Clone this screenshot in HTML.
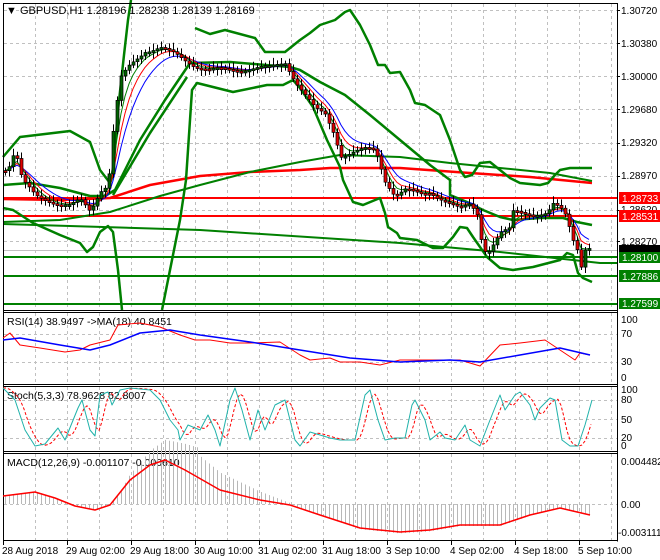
<!DOCTYPE html>
<html><head><meta charset="utf-8"><style>
html,body{margin:0;padding:0;background:#fff;width:660px;height:560px;overflow:hidden}
svg{display:block;font-family:"Liberation Sans",sans-serif;font-size:10.5px}
</style></head><body>
<svg id="s" width="660" height="560" viewBox="0 0 660 560" xmlns="http://www.w3.org/2000/svg">
<rect width="660" height="560" fill="#fff"/>
<g id="grid" stroke="#c0c0c0" stroke-dasharray="3,3" stroke-width="1"></g>
<g id="main"></g>
<path id="wick" d="" stroke="#000" stroke-width="1" fill="none"/>
<path id="bull" d="" stroke="#000" stroke-width="0.7" fill="#006400"/>
<path id="bear" d="" stroke="#000" stroke-width="0.7" fill="#e00000"/>
<g fill="none" stroke="#000" stroke-width="1">
<path d="M3.5 3.5V541.5"/>
<path d="M617.5 3.5V541.5"/>
<path d="M3 3.5H618"/>
<path d="M3 310.5H618M3 312.5H618"/>
<path d="M3 384.5H618M3 386.5H618"/>
<path d="M3 451.5H618M3 453.5H618"/>
<path d="M3 540.5H618"/>
</g>
<g id="ticks" stroke="#000"></g>
<g fill="#000">
<text x="6" y="14" font-size="11">▼ GBPUSD,H1  1.28196 1.28238 1.28139 1.28169</text>
<text x="7" y="325">RSI(14) 38.9497  -&gt;MA(18) 40.8451</text>
<text x="7" y="399">Stoch(5,3,3) 78.9628 52.8007</text>
<text x="7" y="466">MACD(12,26,9) -0.001107 -0.000610</text>
</g>
<g fill="#000" font-size="10">
<text x="621" y="14">1.30720</text>
<text x="621" y="47">1.30380</text>
<text x="621" y="80">1.30000</text>
<text x="621" y="113">1.29680</text>
<text x="621" y="146">1.29320</text>
<text x="621" y="179">1.28970</text>
<text x="621" y="213">1.28620</text>
<text x="621" y="245">1.28270</text>
<text x="621" y="323">100</text><text x="621" y="337">70</text><text x="621" y="365">30</text><text x="621" y="381">0</text>
<text x="621" y="393">100</text><text x="621" y="403">80</text><text x="621" y="423">50</text><text x="621" y="441">20</text><text x="621" y="449">0</text>
<text x="621" y="465">0.004482</text><text x="621" y="508">0.00</text><text x="618" y="536">-0.003111</text>
</g>
<g font-size="10" fill="#fff">
<rect x="619" y="192" width="41" height="12" fill="#f00"/><text x="622" y="202">1.28733</text>
<rect x="619" y="210" width="41" height="12" fill="#f00"/><text x="622" y="220">1.28531</text>
<rect x="619" y="245" width="41" height="7" fill="#000"/>
<rect x="619" y="252" width="41" height="11" fill="#008000"/><text x="622" y="261">1.28100</text>
<rect x="619" y="270" width="41" height="12" fill="#008000"/><text x="622" y="280">1.27886</text>
<rect x="619" y="298" width="41" height="11" fill="#008000"/><text x="622" y="307">1.27599</text>
</g>
<g fill="#000" font-size="10">
<text x="2" y="554">28 Aug 2018</text>
<text x="66" y="554">29 Aug 02:00</text>
<text x="130" y="554">29 Aug 18:00</text>
<text x="194" y="554">30 Aug 10:00</text>
<text x="258" y="554">31 Aug 02:00</text>
<text x="322" y="554">31 Aug 18:00</text>
<text x="386" y="554">3 Sep 10:00</text>
<text x="450" y="554">4 Sep 02:00</text>
<text x="514" y="554">4 Sep 18:00</text>
<text x="578" y="554">5 Sep 10:00</text>
</g>
</svg>
<script>
(function(){
var NS="http://www.w3.org/2000/svg",s=document.getElementById('s'),M=document.getElementById('main'),G=document.getElementById('grid'),T=document.getElementById('ticks');
function el(p,t,a){var e=document.createElementNS(NS,t);for(var k in a)e.setAttribute(k,a[k]);p.appendChild(e);return e}
function pl(p,pts,c,w,extra){var d=pts.map(function(q){return q[0]+','+q[1]}).join(' ');var a={points:d,fill:'none',stroke:c,'stroke-width':w,'stroke-linejoin':'round'};for(var k in extra)a[k]=extra[k];return el(p,'polyline',a)}
function interp(P,xx){for(var j=0;j<P.length-1;j++){if(xx>=P[j][0]&&xx<=P[j+1][0]){var t=(xx-P[j][0])/(P[j+1][0]-P[j][0]||1);return P[j][1]+t*(P[j+1][1]-P[j][1])}}return xx<P[0][0]?P[0][1]:P[P.length-1][1]}
for(var gx=35;gx<617;gx+=32){el(G,'line',{x1:gx+.5,y1:4,x2:gx+.5,y2:310});el(G,'line',{x1:gx+.5,y1:313,x2:gx+.5,y2:384});el(G,'line',{x1:gx+.5,y1:387,x2:gx+.5,y2:451});el(G,'line',{x1:gx+.5,y1:454,x2:gx+.5,y2:540})}
[10,43,76,109,143,176,210,241,275].forEach(function(y){el(G,'line',{x1:4,y1:y+.5,x2:617,y2:y+.5})});
[334,362,400,419,438,504].forEach(function(y){el(G,'line',{x1:4,y1:y+.5,x2:617,y2:y+.5})});
for(var tx=3;tx<617;tx+=64)el(T,'line',{x1:tx+.5,y1:541,x2:tx+.5,y2:545});
[10,43,76,109,143,176,210,241].forEach(function(y){el(T,'line',{x1:617,y1:y+.5,x2:620,y2:y+.5})});
el(M,'line',{x1:4,y1:250.5,x2:617,y2:250.5,stroke:'#c0c0c0','stroke-width':1});
[198,216].forEach(function(y){el(M,'line',{x1:4,y1:y,x2:617,y2:y,stroke:'#f00','stroke-width':2})});
[257,276,304].forEach(function(y){el(M,'line',{x1:4,y1:y,x2:617,y2:y,stroke:'#008000','stroke-width':2})});
pl(M,[[3,224],[200,230],[400,243],[500,252],[600,263],[617,263]],'#008000',2);
pl(M,[[3,199],[60,200],[110,198],[150,185],[200,176],[250,172],[300,170],[330,168],[400,168],[470,173],[530,177],[592,183]],'#f00',2.5);
pl(M,[[3,222],[60,220],[110,212],[160,196],[200,185],[250,172],[300,162],[340,155],[400,157],[450,163],[500,168],[550,173],[592,181]],'#008000',2);
pl(M,[[3,157],[20,137],[70,131],[90,142],[100,170],[110,183],[113,175],[118,110],[124,55],[128,20],[131,0]],'#008000',2.5);
pl(M,[[195,28],[210,34],[225,30],[255,38],[265,52],[285,52],[300,40],[310,33],[320,25],[335,20],[345,12],[350,10],[360,25],[370,45],[378,65],[385,65],[390,73],[400,72],[410,90],[415,103],[425,105],[440,115],[450,140],[460,170],[465,177],[472,175],[480,163],[490,162],[500,170],[510,178],[520,183],[540,185],[548,183],[555,175],[560,170],[570,168],[592,168]],'#008000',2.5);
pl(M,[[3,208],[13,210],[33,223],[60,235],[80,243],[87,252],[93,247],[100,232],[108,226],[113,232],[118,270],[122,310]],'#008000',2.5);
pl(M,[[162,310],[172,260],[180,220],[186,180],[190,120],[192,90],[197,83],[217,88],[233,92],[267,85],[283,85],[293,80],[300,88],[313,107],[327,140],[340,167],[343,180],[353,202],[363,205],[380,198],[385,213],[388,227],[397,233],[400,238],[417,240],[433,248],[443,248],[453,237],[460,227],[467,228],[473,237],[487,257],[500,268],[513,270],[533,267],[560,260],[567,253],[573,255],[578,273],[583,278],[592,282]],'#008000',2.5);
pl(M,[[3,185],[30,183],[60,188],[90,196],[105,196],[115,190],[140,140],[165,100],[190,63],[230,62],[290,67],[300,70],[320,82],[345,95],[370,115],[400,140],[430,165],[450,180],[450,195],[467,202],[483,210],[500,217],[513,220],[540,218],[563,218],[577,222],[592,225]],'#008000',2.5);
pl(M,[[113,195],[150,133],[187,77]],'#008000',2.5);
var P=[[3,170],[10,165],[15,150],[20,175],[25,185],[35,195],[50,200],[60,205],[70,207],[80,200],[90,210],[100,190],[108,185],[112,140],[116,110],[120,80],[130,65],[145,50],[160,48],[175,55],[185,60],[195,65],[210,70],[230,70],[250,68],[270,68],[285,62],[295,80],[305,95],[315,110],[325,115],[335,135],[340,155],[355,152],[365,150],[375,150],[380,165],[385,180],[395,195],[405,190],[420,195],[430,192],[445,200],[460,210],[470,205],[478,215],[482,245],[487,252],[500,233],[510,230],[513,213],[533,213],[547,213],[553,205],[563,212],[567,220],[572,238],[577,248],[580,272],[583,250],[587,245],[592,249]];
var closes=[],xs=[];for(var cx=5;cx<=592;cx+=4){xs.push(cx);closes.push(interp(P,cx)+Math.sin(cx*1.7)*2.5)}
function ema(a,n){var k=2/(n+1),o=[],v=a[0];for(var q=0;q<a.length;q++){v=a[q]*k+v*(1-k);o.push(v)}return o}
[[ema(closes,9),'#00f'],[ema(closes,6),'#f00'],[ema(closes,4),'#008000']].forEach(function(m){pl(M,m[0].map(function(v,q){return[xs[q],v.toFixed(1)]}),m[1],1)});
var wd='',bu='',be='';
for(var n=0;n<xs.length;n++){var o=n?closes[n-1]:closes[0],c=closes[n],tp=Math.min(o,c),h=Math.max(2,Math.abs(o-c)),X=xs[n];
wd+='M'+(X+.5)+' '+(tp-3-(n*7%5)).toFixed(1)+'V'+(tp+h+3+(n*3%4)).toFixed(1);
var r='M'+(X-1)+' '+tp.toFixed(1)+'h3v'+h.toFixed(1)+'h-3Z';
if(c<o)bu+=r;else be+=r;}
document.getElementById('wick').setAttribute('d',wd);
document.getElementById('bull').setAttribute('d',bu);
document.getElementById('bear').setAttribute('d',be);
var R=el(s,'g',{});
pl(R,[[3,338],[10,333],[20,345],[40,348],[65,352],[80,350],[90,345],[110,340],[118,325],[140,323],[160,327],[180,335],[195,340],[210,340],[230,343],[250,343],[280,342],[300,355],[310,360],[330,358],[340,362],[360,362],[380,365],[400,360],[430,360],[460,360],[480,366],[500,345],[520,343],[545,340],[560,350],[575,360],[580,353],[590,355]],'#f00',1);
pl(R,[[3,340],[20,338],[60,345],[90,350],[110,345],[140,333],[170,330],[200,335],[250,342],[300,350],[350,358],[400,362],[450,360],[480,362],[520,355],[560,348],[590,355]],'#00f',1.5);
var ST=[[3,388],[15,400],[25,430],[35,446],[45,444],[58,428],[65,440],[78,408],[82,400],[90,430],[95,436],[100,395],[108,392],[112,405],[120,390],[130,388],[150,390],[160,400],[170,420],[178,430],[180,440],[188,425],[200,430],[208,415],[215,430],[220,446],[230,400],[235,388],[242,410],[250,440],[258,410],[265,430],[275,405],[285,400],[295,440],[300,446],[310,432],[320,435],[330,438],[340,440],[355,440],[365,395],[370,390],[378,420],[385,440],[395,438],[405,438],[412,405],[415,400],[425,420],[430,440],[440,432],[445,438],[455,440],[465,425],[470,440],[480,446],[490,420],[500,395],[505,410],[515,395],[520,392],[530,405],[535,420],[540,408],[550,398],[555,400],[562,440],[570,446],[578,446],[585,425],[592,400]];
var sg=[];for(var sx=3;sx<=592;sx+=3){var v=(interp(ST,sx-3)+interp(ST,sx-6)+interp(ST,sx-9))/3;sg.push([sx,v.toFixed(1)])}
pl(R,sg,'#f00',1,{'stroke-dasharray':'3,2'});
pl(R,ST,'#20b2aa',1);
var MP=[[3,496],[35,492],[55,498],[75,506],[95,510],[110,505],[130,480],[150,465],[165,460],[185,470],[220,490],[260,500],[290,505],[320,515],[360,528],[400,532],[430,530],[460,525],[500,525],[530,515],[560,508],[590,515]];
var hd='';for(var mx=5;mx<=592;mx+=4){var mv=interp(MP,mx);var hy=504+(mv-504)*1.05;if(mx>120&&mx<300)hy=504-(504-mv)*1.1-(mx<200?(mx-120)*0.35:(300-mx)*0.2);hd+='M'+(mx+.5)+' 504V'+hy.toFixed(1);}
el(R,'path',{d:hd,stroke:'#b8b8b8','stroke-width':1,fill:'none'});
pl(R,MP,'#f00',1.5);
})();
</script>
</body></html>
